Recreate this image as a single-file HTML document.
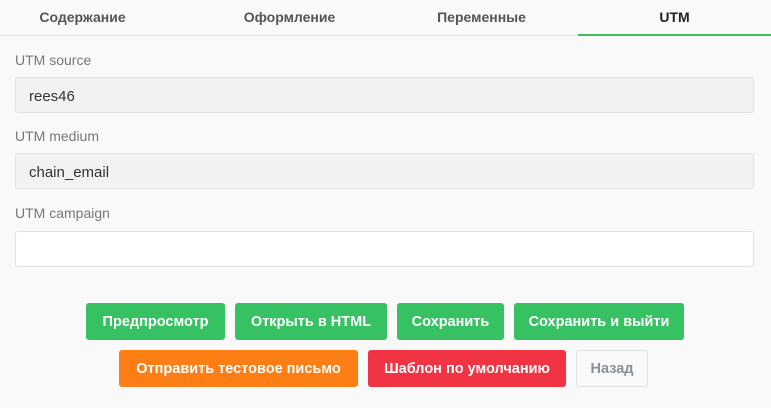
<!DOCTYPE html>
<html><head><meta charset="utf-8"><style>
*{box-sizing:border-box;margin:0;padding:0}
body{width:771px;height:408px;background:#f9f9f9;font-family:"Liberation Sans",sans-serif;position:relative;overflow:hidden}
.tab{position:absolute;top:0;height:35px;line-height:35px;text-align:center;font-size:14px;font-weight:bold;color:#555}
.line{position:absolute;top:35px;left:0;width:771px;height:1px;background:#e2e2e2}
.act{position:absolute;top:34px;left:578px;width:193px;height:2px;background:#3dbd5d}
.lbl{position:absolute;left:15px;font-size:14px;color:#777}
.inp{position:absolute;left:15px;width:739px;height:36px;border:1px solid #dfe1e4;border-radius:3px;background:#f1f2f3;font-size:15px;color:#333;padding-left:13px;line-height:37px}
.b{position:absolute;height:37px;line-height:38px;text-align:center;color:#fff;font-size:14.5px;font-weight:bold;border-radius:3px;white-space:nowrap}
.g{background:#36c163}
</style></head><body>
<div class="tab" style="left:0;width:165px">Содержание</div>
<div class="tab" style="left:193px;width:193px">Оформление</div>
<div class="tab" style="left:385px;width:193px">Переменные</div>
<div class="tab" style="left:578px;width:193px;color:#222">UTM</div>
<div class="line"></div><div class="act"></div>
<div class="lbl" style="top:52px">UTM source</div>
<div class="inp" style="top:77px">rees46</div>
<div class="lbl" style="top:128px">UTM medium</div>
<div class="inp" style="top:153px">chain_email</div>
<div class="lbl" style="top:205px">UTM campaign</div>
<div class="inp" style="top:231px;background:#fff"></div>
<div class="b g" style="left:86px;top:303px;width:139px">Предпросмотр</div>
<div class="b g" style="left:235px;top:303px;width:152px">Открыть в HTML</div>
<div class="b g" style="left:397px;top:303px;width:107px">Сохранить</div>
<div class="b g" style="left:514px;top:303px;width:170px">Сохранить и выйти</div>
<div class="b" style="left:119px;top:350px;width:239px;background:#fd7e14">Отправить тестовое письмо</div>
<div class="b" style="left:368px;top:350px;width:198px;background:#f03444">Шаблон по умолчанию</div>
<div class="b" style="left:576px;top:350px;width:72px;background:#f9f9f9;border:1px solid #e0e0e0;color:#8a9099;line-height:36px">Назад</div>
</body></html>
